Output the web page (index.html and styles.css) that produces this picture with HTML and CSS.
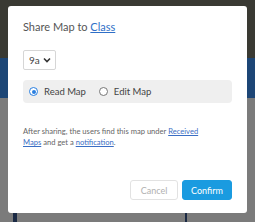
FILE: index.html
```html
<!DOCTYPE html>
<html>
<head>
<meta charset="utf-8">
<link rel="stylesheet" href="styles.css">
</head>
<body>
<div class="page">
  <div class="band-top"></div>
  <div class="band-blue"></div>
  <div class="band-gray">
    <div class="dark-mark m1"></div>
    <div class="dark-mark m2"></div>
  </div>
</div>
<div class="modal">
  <h1 class="title">Share Map to <a href="#">Class</a></h1>
  <div class="select">
    <span>9a</span>
    <svg width="8" height="6" viewBox="0 0 8 6"><path d="M1 1.5 L4 4.5 L7 1.5" fill="none" stroke="#333" stroke-width="1.6"/></svg>
  </div>
  <div class="radios">
    <label class="radio"><span class="dot on"></span>Read Map</label>
    <label class="radio"><span class="dot"></span>Edit Map</label>
  </div>
  <p class="note">After sharing, the users find this map under <a href="#">Received Maps</a> and get a <a href="#">notification</a>.</p>
  <div class="actions">
    <button class="btn cancel">Cancel</button>
    <button class="btn confirm">Confirm</button>
  </div>
</div>
</body>
</html>
```
FILE: styles.css
```css
html, body { margin: 0; padding: 0; }
body { width: 255px; height: 222px; overflow: hidden; position: relative; font-family: "Lato", "Open Sans", sans-serif; }
.page { height: 222px; display: flex; flex-direction: column; }
.band-top { height: 58px; background: #3a3a33; }
.band-blue { height: 40px; background: #1d4676; }
.band-gray { flex: 1; background: #7b7b7b; position: relative; }
.dark-mark { position: absolute; bottom: 0; height: 9px; background: #1b2a44; }
.m1 { left: 13px; width: 4px; }
.m2 { left: 185px; width: 2px; }
.modal {
  position: absolute; left: 8px; top: 6px; width: 239px; height: 207px;
  box-sizing: border-box; background: #fff; border-radius: 3px;
  padding: 14px 15px 0 15px;
  display: flex; flex-direction: column;
}
.title { margin: 0; font-size: 11px; font-weight: 400; color: #555; line-height: 14px; }
.title a { color: #2f6fc7; }
.select {
  margin-top: 16px; width: 33px; height: 20px; box-sizing: border-box;
  border: 1px solid #d6d6d6; border-radius: 2px;
  display: flex; align-items: center; justify-content: space-between;
  padding: 0 4px 0 5px; font-size: 10px; color: #444;
}
.radios {
  margin-top: 10px; height: 23px; background: #efefef; border-radius: 4px;
  display: flex; align-items: center; padding-left: 6px; gap: 13px;
  font-size: 9.5px; color: #444;
}
.radio { display: flex; align-items: center; gap: 6px; }
.dot { width: 9px; height: 9px; border-radius: 50%; border: 1px solid #777; background: #fff; box-sizing: border-box; position: relative; }
.dot.on { border-color: #2a7fe0; }
.dot.on::after { content: ""; position: absolute; left: 1.5px; top: 1.5px; width: 4px; height: 4px; border-radius: 50%; background: #2a7fe0; }
.note { margin: 23px 0 0 0; max-width: 192px; font-size: 7.6px; line-height: 11px; color: #666; }
.note a { color: #3a6ec4; }
.actions { margin-top: auto; margin-bottom: 13px; display: flex; justify-content: flex-end; gap: 4px; }
.btn { height: 20px; border-radius: 3px; font-family: inherit; font-size: 9px; padding: 0; }
.cancel { width: 48px; background: #fff; border: 1px solid #e2e2e2; color: #b0b0b0; }
.confirm { width: 50px; background: #1a9be0; border: 1px solid #1a9be0; color: #fff; }
```
